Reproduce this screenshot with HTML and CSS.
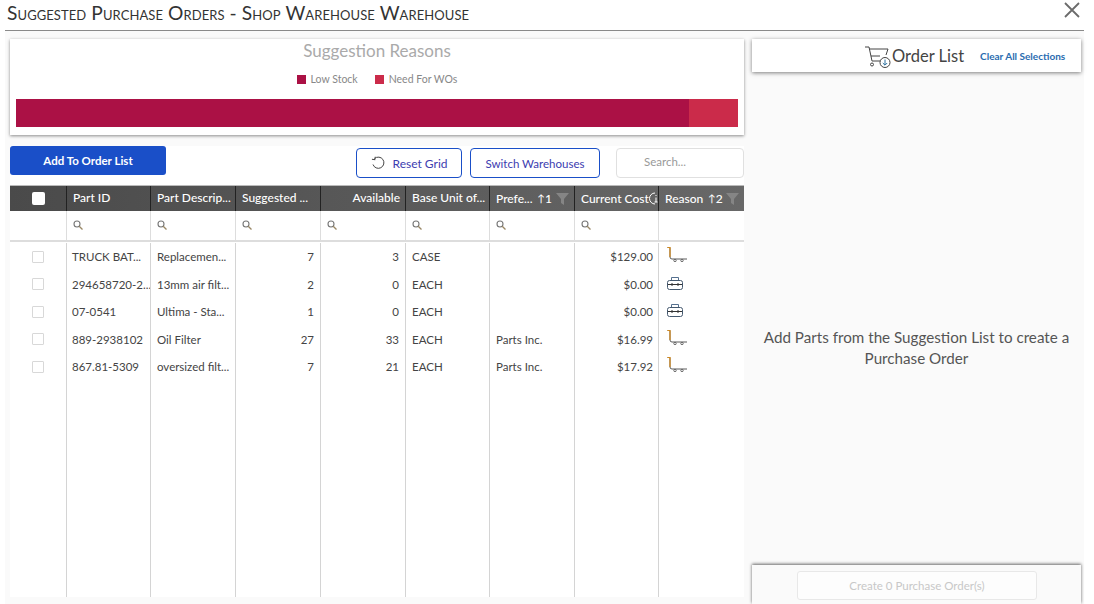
FILE: index.html
```html
<!DOCTYPE html>
<html lang="en">
<head>
<meta charset="utf-8">
<title>Suggested Purchase Orders</title>
<link rel="stylesheet" href="styles.css">
</head>
<body>
<header class="modal-head">
  <h1>Suggested Purchase Orders - Shop Warehouse Warehouse</h1>
  <svg class="close" width="16" height="16" viewBox="0 0 16 16"><path d="M1 1l14 14M15 1L1 15" stroke="#6b6b6b" stroke-width="1.8" fill="none"/></svg>
</header>
<main class="content">
  <section class="left">
    <div class="chart-card">
      <h2>Suggestion Reasons</h2>
      <div class="legend">
        <span class="key"><i class="swatch low"></i>Low Stock</span>
        <span class="key"><i class="swatch need"></i>Need For WOs</span>
      </div>
      <div class="bar"><div class="bar-low"></div><div class="bar-need"></div></div>
    </div>
    <div class="grid-wrap">
      <div class="toolbar">
        <button class="primary">Add To Order List</button>
        <div class="tools">
          <button class="outline reset">
            <svg width="15" height="15" viewBox="0 0 15 15"><path d="M3.5 2.6A5.6 5.6 0 1 1 2 8.5" fill="none" stroke="#444" stroke-width="1"/><path d="M3.9 .6v3H1" transform="rotate(8 3 3)" fill="none" stroke="#444" stroke-width="1"/></svg>
            Reset Grid
          </button>
          <button class="outline switch">Switch Warehouses</button>
          <div class="search">Search...</div>
        </div>
      </div>
      <div class="table">
        <div class="row head">
          <div class="c center"><span class="head-check"></span></div>
          <div class="c">Part ID</div>
          <div class="c">Part Descrip...</div>
          <div class="c">Suggested ...</div>
          <div class="c right">Available</div>
          <div class="c">Base Unit of...</div>
          <div class="c sort">Prefe...<span class="sortno"><span class="arrow">↑</span>1</span>
            <svg class="funnel" width="13" height="12" viewBox="0 0 13 12"><path d="M0 0h13L8 6v6L5 10V6z" fill="#858585"/></svg></div>
          <div class="c cost">Current Cost<svg class="info" width="11" height="13" viewBox="0 0 11 13"><path d="M6 1A5.500 5.500 0 0 0 6 12" fill="none" stroke="#fff"/><path d="M7 3v1M7 5.500V10M5.500 10h3" stroke="#fff" fill="none"/></svg></div>
          <div class="c sort">Reason<span class="sortno"><span class="arrow">↑</span>2</span>
            <svg class="funnel" width="13" height="12" viewBox="0 0 13 12"><path d="M0 0h13L8 6v6L5 10V6z" fill="#858585"/></svg></div>
        </div>
        <div class="row filter">
          <div class="c"></div>
          <div class="c"><svg class="mag" viewBox="0 0 10 10"><circle cx="4" cy="4" r="3" fill="none" stroke="#777" stroke-width="1.100"/><path d="M6.200 6.200L9.500 9.500" stroke="#998866" stroke-width="1.300"/></svg></div>
          <div class="c"><svg class="mag" viewBox="0 0 10 10"><circle cx="4" cy="4" r="3" fill="none" stroke="#777" stroke-width="1.100"/><path d="M6.200 6.200L9.500 9.500" stroke="#998866" stroke-width="1.300"/></svg></div>
          <div class="c"><svg class="mag" viewBox="0 0 10 10"><circle cx="4" cy="4" r="3" fill="none" stroke="#777" stroke-width="1.100"/><path d="M6.200 6.200L9.500 9.500" stroke="#998866" stroke-width="1.300"/></svg></div>
          <div class="c"><svg class="mag" viewBox="0 0 10 10"><circle cx="4" cy="4" r="3" fill="none" stroke="#777" stroke-width="1.100"/><path d="M6.200 6.200L9.500 9.500" stroke="#998866" stroke-width="1.300"/></svg></div>
          <div class="c"><svg class="mag" viewBox="0 0 10 10"><circle cx="4" cy="4" r="3" fill="none" stroke="#777" stroke-width="1.100"/><path d="M6.200 6.200L9.500 9.500" stroke="#998866" stroke-width="1.300"/></svg></div>
          <div class="c"><svg class="mag" viewBox="0 0 10 10"><circle cx="4" cy="4" r="3" fill="none" stroke="#777" stroke-width="1.100"/><path d="M6.200 6.200L9.500 9.500" stroke="#998866" stroke-width="1.300"/></svg></div>
          <div class="c"><svg class="mag" viewBox="0 0 10 10"><circle cx="4" cy="4" r="3" fill="none" stroke="#777" stroke-width="1.100"/><path d="M6.200 6.200L9.500 9.500" stroke="#998866" stroke-width="1.300"/></svg></div>
          <div class="c"></div>
        </div>
        <div class="rows">
          <div class="row body">
            <div class="c center"><span class="check"></span></div><div class="c">TRUCK BAT...</div><div class="c">Replacemen...</div><div class="c right">7</div><div class="c right">3</div><div class="c">CASE</div><div class="c"></div><div class="c right">$129.00</div>
            <div class="c"><svg class="cart" viewBox="0 0 20 15"><path d="M.5 .5h2.500V10q0 2 2 2H20" fill="none" stroke="#5a5a5a"/><path d="M.5 .5h2.500V10" fill="none" stroke="#d58a1c" stroke-width="1.200"/><circle cx="8" cy="13.500" r="1.200" fill="none" stroke="#666"/><circle cx="15" cy="13.500" r="1.200" fill="none" stroke="#666"/></svg></div>
          </div>
          <div class="row body">
            <div class="c center"><span class="check"></span></div><div class="c">294658720-2...</div><div class="c">13mm air filt...</div><div class="c right">2</div><div class="c right">0</div><div class="c">EACH</div><div class="c"></div><div class="c right">$0.00</div>
            <div class="c"><svg class="box" viewBox="0 0 16 14"><path d="M4.500 4V1.500h7V4" fill="none" stroke="#55708f"/><rect x=".5" y="4.500" width="15" height="9" rx="2" fill="none" stroke="#44586e"/><path d="M1 8.500h14M5 7v3M11 7v3" stroke="#333" fill="none"/></svg></div>
          </div>
          <div class="row body">
            <div class="c center"><span class="check"></span></div><div class="c">07-0541</div><div class="c">Ultima - Sta...</div><div class="c right">1</div><div class="c right">0</div><div class="c">EACH</div><div class="c"></div><div class="c right">$0.00</div>
            <div class="c"><svg class="box" viewBox="0 0 16 14"><path d="M4.500 4V1.500h7V4" fill="none" stroke="#55708f"/><rect x=".5" y="4.500" width="15" height="9" rx="2" fill="none" stroke="#44586e"/><path d="M1 8.500h14M5 7v3M11 7v3" stroke="#333" fill="none"/></svg></div>
          </div>
          <div class="row body">
            <div class="c center"><span class="check"></span></div><div class="c">889-2938102</div><div class="c">Oil Filter</div><div class="c right">27</div><div class="c right">33</div><div class="c">EACH</div><div class="c">Parts Inc.</div><div class="c right">$16.99</div>
            <div class="c"><svg class="cart" viewBox="0 0 20 15"><path d="M.5 .5h2.500V10q0 2 2 2H20" fill="none" stroke="#5a5a5a"/><path d="M.5 .5h2.500V10" fill="none" stroke="#d58a1c" stroke-width="1.200"/><circle cx="8" cy="13.500" r="1.200" fill="none" stroke="#666"/><circle cx="15" cy="13.500" r="1.200" fill="none" stroke="#666"/></svg></div>
          </div>
          <div class="row body">
            <div class="c center"><span class="check"></span></div><div class="c">867.81-5309</div><div class="c">oversized filt...</div><div class="c right">7</div><div class="c right">21</div><div class="c">EACH</div><div class="c">Parts Inc.</div><div class="c right">$17.92</div>
            <div class="c"><svg class="cart" viewBox="0 0 20 15"><path d="M.5 .5h2.500V10q0 2 2 2H20" fill="none" stroke="#5a5a5a"/><path d="M.5 .5h2.500V10" fill="none" stroke="#d58a1c" stroke-width="1.200"/><circle cx="8" cy="13.500" r="1.200" fill="none" stroke="#666"/><circle cx="15" cy="13.500" r="1.200" fill="none" stroke="#666"/></svg></div>
          </div>
          <div class="row body filler">
            <div class="c"></div><div class="c"></div><div class="c"></div><div class="c"></div><div class="c"></div><div class="c"></div><div class="c"></div><div class="c"></div><div class="c"></div>
          </div>
        </div>
      </div>
    </div>
  </section>
  <aside class="right-panel">
    <div class="order-head">
      <svg class="order-cart" width="28" height="24" viewBox="0 0 28 24"><path d="M1 2h4l3 14h11" fill="none" stroke="#444"/><path d="M5.500 4H24l-2 6" fill="none" stroke="#444"/><path d="M7 11h9" stroke="#444" fill="none"/><circle cx="8" cy="19.500" r="1.500" fill="none" stroke="#444"/><circle cx="21" cy="17.500" r="5" fill="#fff" stroke="#444"/><path d="M21 14.500v5.500M18.800 18l2.200 2.200 2.200-2.200" fill="none" stroke="#2a6f9e"/></svg>
      <span class="order-title">Order List</span>
      <a class="clear">Clear All Selections</a>
    </div>
    <div class="empty">Add Parts from the Suggestion List to create a Purchase Order</div>
    <div class="order-foot"><button class="create">Create 0 Purchase Order(s)</button></div>
  </aside>
</main>
</body>
</html>
```
FILE: styles.css
```css
* { box-sizing: border-box; }
html, body { margin: 0; height: 100%; }
body {
  width: 1094px;
  height: 604px;
  overflow: hidden;
  background: #fff;
  font-family: "Lato", "Open Sans", sans-serif;
  font-size: 11.500px;
  color: #444;
  display: flex;
  flex-direction: column;
}
.modal-head {
  height: 31px;
  margin: 0 10px 0 5px;
  padding: 0 1px 0 2px;
  border-bottom: 1px solid #8a8a8a;
  display: flex;
  justify-content: space-between;
  align-items: flex-start;
}
.modal-head h1 {
  margin: 3px 0 0;
  font-size: 19.200px;
  letter-spacing: .08px;
  line-height: 20px;
  font-weight: 400;
  font-variant: small-caps;
  color: #333;
  white-space: nowrap;
}
.close { margin: 2px 3px 0 0; }
.content {
  flex: 1;
  min-height: 0;
  display: flex;
  margin: 0 10px 0 5px;
  background: #fafafa;
}
.left {
  width: 739px;
  flex: none;
  padding: 8px 0 7px 5px;
  display: flex;
  flex-direction: column;
}
.chart-card {
  height: 96px;
  margin-bottom: 11px;
  padding: 2px 6px 0;
  background: #fff;
  box-shadow: 0 1px 3px rgba(0,0,0,.45);
  text-align: center;
}
.chart-card h2 {
  margin: 0;
  font-size: 17px;
  line-height: 20px;
  font-weight: 400;
  color: #aaa;
}
.legend {
  margin-top: 11px;
  height: 14px;
  display: flex;
  justify-content: center;
  gap: 17px;
  font-size: 10.500px;
  line-height: 14px;
  color: #888;
}
.key { display: inline-flex; align-items: center; }
.swatch { width: 9px; height: 9px; margin-right: 5px; }
.low { background: #ab1145; }
.need { background: #cb2b4a; }
.bar { margin-top: 13px; height: 28px; display: flex; }
.bar-low { flex: 1; background: #ab1145; }
.bar-need { width: 49px; background: #cb2b4a; }
.grid-wrap {
  flex: 1;
  min-height: 0;
  display: flex;
  flex-direction: column;
  background: #fff;
}
.toolbar {
  height: 39px;
  display: flex;
  justify-content: space-between;
  align-items: flex-start;
}
button { font-family: inherit; cursor: pointer; }
.primary {
  width: 156px;
  height: 29px;
  border: 0;
  border-radius: 3px;
  background: #1a4fc8;
  color: #fff;
  font-size: 11.500px;
  font-weight: 700;
}
.tools { display: flex; gap: 8px; margin-top: 2px; }
.outline {
  height: 30px;
  border: 1px solid #1a4fc8;
  border-radius: 4px;
  background: #fff;
  color: #3c3cb0;
  font-size: 11.500px;
  padding: 0;
}
.reset { width: 106px; display: flex; align-items: center; justify-content: center; gap: 7px; font-size: 12px; }
.switch { width: 130px; }
.search {
  width: 128px;
  height: 30px;
  margin-left: 8px;
  padding-left: 27px;
  border: 1px solid #e0e0e0;
  border-radius: 4px;
  color: #999;
  line-height: 26px;
}
.table { flex: 1; min-height: 0; display: flex; flex-direction: column; }
.row {
  display: grid;
  grid-template-columns: 56px 84px 85px 85px 85px 84px 85px 84px 86px;
}
.head {
  height: 26px;
  background: linear-gradient(90deg, #4a4a4a, #686868);
  color: #fff;
  font-size: 12px;
  font-weight: 500;
  line-height: 23px;
  border-top: 1px solid #bbb;
}
.head .c {
  padding: 0 5px 0 6px;
  border-left: 1px solid #222;
  white-space: nowrap;
  overflow: hidden;
}
.head .c:first-child { border-left: 0; }
.center { display: flex; justify-content: center; align-items: center; }
.right { text-align: right; }
.head-check {
  width: 13px;
  height: 13px;
  background: #fff;
  border-radius: 2px;
}
.sort { display: flex; align-items: center; padding-bottom: 1px; }
.sortno { margin-left: 5px; display: inline-flex; }
.arrow { font-size: 10px; margin-right: 0; }
.funnel { margin-left: auto; flex: none; }
.cost { display: flex; align-items: center; padding-bottom: 1px; }
.info { flex: none; }
.filter {
  height: 31px;
  border-bottom: 2px solid #ddd;
}
.filter .c {
  border-left: 1px solid #ddd;
  padding: 9px 0 0 6px;
}
.filter .c:first-child { border-left: 0; }
.mag { width: 10px; height: 10px; display: block; }
.rows { flex: 1; min-height: 0; display: flex; flex-direction: column; padding-top: 1px; }
.body { height: 27.500px; line-height: 27.500px; }
.body .c {
  padding: 0 6px;
  border-left: 1px solid #d4d4d4;
  white-space: nowrap;
  overflow: hidden;
  color: #444;
  font-size: 11.500px;
}
.body .c:first-child { border-left: 0; }
.body .c:nth-child(2) { padding: 0 0 0 5px; }
.body .c:nth-child(8) { padding-right: 5px; }
.filler { flex: 1; height: auto; }
.check {
  width: 12px;
  height: 12px;
  border: 1px solid #d8d8d8;
  border-radius: 1px;
}
.cart { width: 20px; height: 15px; margin: 4px 0 0 2px; display: block; }
.box { width: 16px; height: 14px; margin: 5px 0 0 2px; display: block; }
.right-panel {
  flex: 1;
  padding: 8px 3px 0 8px;
  display: flex;
  flex-direction: column;
  min-width: 0;
}
.order-head {
  height: 33px;
  background: #fff;
  box-shadow: 0 1px 4px rgba(0,0,0,.5);
  display: flex;
  align-items: center;
  padding-left: 112px;
}
.order-cart { margin-top: 2px; }
.order-title { font-size: 16.500px; color: #444; }
.clear {
  margin-left: 16px;
  font-size: 10px;
  font-weight: 700;
  color: #2a6cb0;
}
.empty {
  flex: 1;
  display: flex;
  align-items: center;
  justify-content: center;
  text-align: center;
  padding: 59px 6px 0;
  font-size: 15.200px;
  line-height: 21px;
  color: #555;
}
.order-foot {
  height: 39px;
  padding: 6px 0 0 1px;
  box-shadow: 0 -1px 3px rgba(0,0,0,.6);
  display: flex;
  justify-content: center;
  align-items: flex-start;
}
.create {
  width: 240px;
  height: 29px;
  border: 1px solid #e8e8e8;
  border-radius: 3px;
  background: #fdfdfd;
  color: #c8c8c8;
  font-size: 11.500px;
}
```
